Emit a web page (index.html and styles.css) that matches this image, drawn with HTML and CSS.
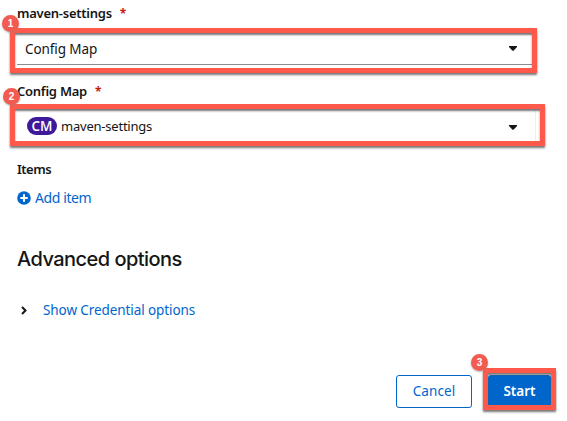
FILE: index.html
```html
<!DOCTYPE html>
<html lang="en">
<head>
<meta charset="utf-8">
<title>Start pipeline</title>
<link rel="stylesheet" href="styles.css">
</head>
<body>
<form class="form">
  <div class="label"><span class="label-text">maven-settings</span><span class="required">*</span></div>
  <div class="select select-type">
    <span class="value-type">Config Map</span>
    <svg class="caret" viewBox="0 0 8 5"><path d="M0 0h8v1L4.7 4.6q-.7.7-1.4 0L0 1z"/></svg>
    <div class="frame frame-wide"><span class="step">1</span></div>
  </div>
  <div class="label label-map"><span class="label-text">Config Map</span><span class="required">*</span></div>
  <div class="select select-map">
    <span class="badge">CM</span>
    <span class="value-map">maven-settings</span>
    <svg class="caret" viewBox="0 0 8 5"><path d="M0 0h8v1L4.7 4.6q-.7.7-1.4 0L0 1z"/></svg>
    <div class="frame frame-map"><span class="step">2</span></div>
  </div>
  <div class="label label-items">Items</div>
  <a class="add">
    <svg class="plus" viewBox="0 0 14 14"><circle cx="7" cy="7" r="6.8"/><path d="M7 3.3v7.4M3.3 7h7.4"/></svg>
    <span>Add item</span>
  </a>
  <h2 class="heading">Advanced options</h2>
  <a class="expand">
    <svg class="chevron" viewBox="0 0 6 9"><path d="M1 1l3.5 3.5L1 8"/></svg>
    <span>Show Credential options</span>
  </a>
  <div class="actions">
    <button type="button" class="button cancel">Cancel</button>
    <div class="start-wrap">
      <button type="button" class="button start">Start</button>
      <div class="frame frame-start"><span class="step">3</span></div>
    </div>
  </div>
</form>
</body>
</html>
```

FILE: styles.css
```css
* { box-sizing: border-box; }
body { margin: 0; background: #fff; color: #151515; font: 13px/20px "Noto Sans", sans-serif; overflow: hidden; }
.form { width: 567px; height: 421px; padding: 3px 0 0 17px; }
.label { display: flex; height: 20px; font-weight: 600; font-size: 13px; }
.label-text { letter-spacing: -.25px; }
.required { margin-left: 8px; color: #c9190b; font: 700 12px/22px "Open Sans", sans-serif; }
.select { position: relative; display: flex; align-items: center; width: 516px; }
.select-type { height: 32px; margin-top: 10px; padding-left: 8px; border-bottom: 1px solid #8a8d90; }
.value-type { font-size: 13.5px; letter-spacing: -.1px; transform: translateY(-.5px); }
.caret { width: 8px; height: 5px; margin-left: auto; margin-right: 16px; fill: #151515; }
.label-map { margin-top: 16px; }
.select-map { width: 519px; height: 32px; margin-top: 9px; padding-left: 10px; border-right: 1px solid #eee; }
.select-map .caret { margin-right: 18px; transform: translateY(1px); }
.badge { width: 30px; height: 18px; border-radius: 9px; background: #40199a; color: #fff; font: 600 13.5px/18px "Open Sans", sans-serif; text-align: center; }
.value-map { margin-left: 4px; letter-spacing: -.22px; }
.frame { position: absolute; border: 5px solid #ff594b; box-shadow: 0 2px 2px #555c, inset 0 2px 2px #555c; pointer-events: none; }
.frame-wide { left: -7px; top: -5px; width: 527px; height: 45px; }
.frame-map { left: -7px; top: -6px; width: 535px; height: 42px; }
.frame-start { left: -5px; top: -7px; width: 73px; height: 42px; }
.step { position: absolute; left: -13px; top: -18px; width: 17px; height: 17px; border-radius: 50%; background: #f35b50; box-shadow: 0 1px 2px #8889; color: #fff; font: 700 10px/17px "Liberation Sans", sans-serif; text-align: center; }
.frame-map .step { left: -12px; top: -21px; }
.frame-start .step { left: -17px; top: -19px; }
.label-items { margin-top: 17px; letter-spacing: -.5px; }
.add { display: flex; align-items: center; height: 20px; margin-top: 9px; gap: 4px; color: #06c; font-size: 14px; letter-spacing: -.4px; }
.plus { width: 14px; height: 14px; fill: #06c; stroke: #fff; stroke-width: 2; }
.plus circle { stroke: none; }
.heading { height: 30px; margin: 36px 0 0; font: 500 20px/30px Inter, sans-serif; letter-spacing: -.54px; }
.expand { display: flex; align-items: center; height: 20px; margin-top: 26px; padding-left: 4px; gap: 16px; color: #06c; font-size: 13.5px; letter-spacing: -.09px; }
.chevron { width: 6px; height: 9px; fill: none; stroke: #151515; stroke-width: 2; }
.actions { display: flex; margin: 55px 0 0 379px; gap: 16px; }
.button { display: block; height: 33px; padding: 0; border-radius: 3px; font: 13.5px/31px "Noto Sans", sans-serif; }
.cancel { width: 76px; border: 1px solid #06c; background: #fff; color: #06c; letter-spacing: .1px; }
.start-wrap { position: relative; }
.start { width: 63px; height: 32px; border: 0; background: #06c; color: #fff; font-weight: 600; }
```
